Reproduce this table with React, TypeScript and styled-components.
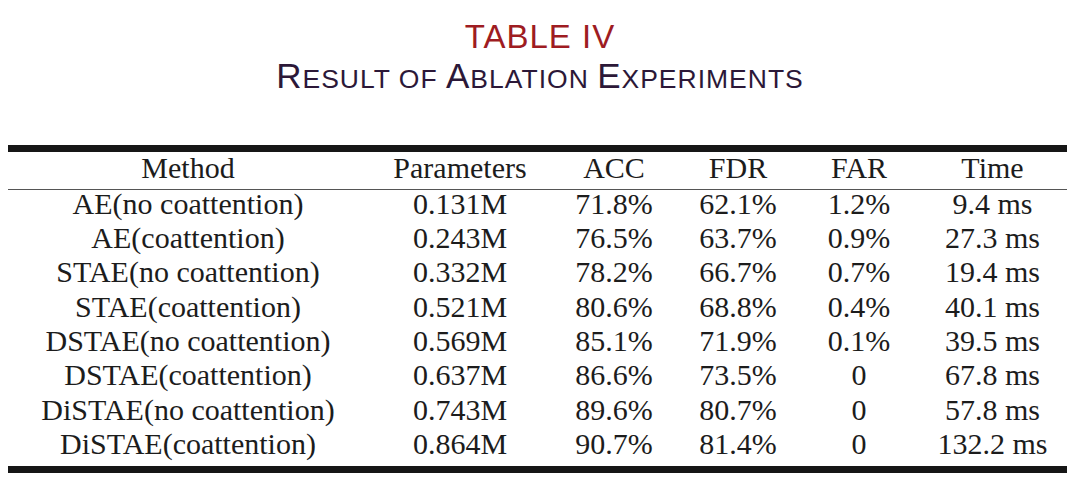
import styled, { createGlobalStyle } from "styled-components";

type Row = {
  method: string;
  params: string;
  acc: string;
  fdr: string;
  far: string;
  time: string;
};

const rows: Row[] = [
  { method: "AE(no coattention)", params: "0.131M", acc: "71.8%", fdr: "62.1%", far: "1.2%", time: "9.4 ms" },
  { method: "AE(coattention)", params: "0.243M", acc: "76.5%", fdr: "63.7%", far: "0.9%", time: "27.3 ms" },
  { method: "STAE(no coattention)", params: "0.332M", acc: "78.2%", fdr: "66.7%", far: "0.7%", time: "19.4 ms" },
  { method: "STAE(coattention)", params: "0.521M", acc: "80.6%", fdr: "68.8%", far: "0.4%", time: "40.1 ms" },
  { method: "DSTAE(no coattention)", params: "0.569M", acc: "85.1%", fdr: "71.9%", far: "0.1%", time: "39.5 ms" },
  { method: "DSTAE(coattention)", params: "0.637M", acc: "86.6%", fdr: "73.5%", far: "0", time: "67.8 ms" },
  { method: "DiSTAE(no coattention)", params: "0.743M", acc: "89.6%", fdr: "80.7%", far: "0", time: "57.8 ms" },
  { method: "DiSTAE(coattention)", params: "0.864M", acc: "90.7%", fdr: "81.4%", far: "0", time: "132.2 ms" },
];

const headers = ["Method", "Parameters", "ACC", "FDR", "FAR", "Time"];

const GlobalStyle = createGlobalStyle`
  html, body {
    margin: 0;
    padding: 0;
    background: #ffffff;
  }
`;

const Page = styled.div`
  width: 1080px;
  height: 482px;
  overflow: hidden;
  background: #ffffff;
`;

const Caption = styled.div`
  padding-top: 18px;
  text-align: center;
  font-family: "Liberation Sans", Arial, sans-serif;
`;

const TableNo = styled.div`
  color: #9e1c22;
  font-size: 33px;
  line-height: 37px;
  letter-spacing: 1px;
`;

const TableTitle = styled.div`
  color: #2c1838;
  line-height: 42px;
  letter-spacing: 1px;
`;

const Cap = styled.span<{ $small?: boolean }>`
  font-size: ${(p) => (p.$small ? "26.5px" : "35px")};
`;

const Grid = styled.div`
  margin: 41px 0 0 8px;
  width: 1059px;
  display: grid;
  grid-template-columns: 360px 184px 124px 124px 118px 149px;
  font-family: "Liberation Serif", "Times New Roman", serif;
  font-size: 30px;
  color: #1c1c1c;
  border-top: 7px solid #161616;
  border-bottom: 7px solid #161616;
`;

const HeadCell = styled.div`
  text-align: center;
  line-height: 31.75px;
  padding-bottom: 5px;
  border-bottom: 1.5px solid #555555;
`;

const Cell = styled.div<{ $last?: boolean }>`
  text-align: center;
  white-space: nowrap;
  line-height: 28.75px;
  padding-bottom: ${(p) => (p.$last ? "7px" : "5.55px")};
`;

export default function App() {
  return (
    <Page>
      <GlobalStyle />
      <Caption>
        <TableNo>TABLE IV</TableNo>
        <TableTitle>
          <Cap>R</Cap>
          <Cap $small>ESULT OF </Cap>
          <Cap>A</Cap>
          <Cap $small>BLATION </Cap>
          <Cap>E</Cap>
          <Cap $small>XPERIMENTS</Cap>
        </TableTitle>
      </Caption>
      <Grid>
        {headers.map((h) => (
          <HeadCell key={h}>{h}</HeadCell>
        ))}
        {rows.map((r, i) => {
          const last = i === rows.length - 1;
          return [r.method, r.params, r.acc, r.fdr, r.far, r.time].map((v, j) => (
            <Cell key={`${i}-${j}`} $last={last}>
              {v}
            </Cell>
          ));
        })}
      </Grid>
    </Page>
  );
}
